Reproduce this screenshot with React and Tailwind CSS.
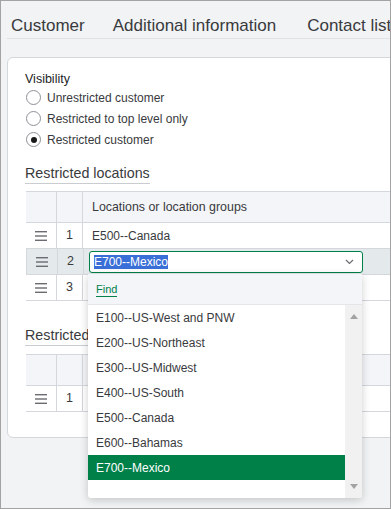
import React from "react";

const Drag = () => (
  <svg width="12" height="10" viewBox="0 0 12 10" className="block">
    <rect x="0" y="0" width="12" height="1.4" fill="#6b6c72" />
    <rect x="0" y="4.3" width="12" height="1.4" fill="#6b6c72" />
    <rect x="0" y="8.6" width="12" height="1.4" fill="#6b6c72" />
  </svg>
);

const Radio = ({ checked, label }) => (
  <div className="flex items-center h-[21px]">
    <div className="ml-[1px] w-[15px] h-[15px] rounded-full border border-[#8d9096] bg-white flex items-center justify-center">
      {checked && <div className="w-[6px] h-[6px] rounded-full bg-[#1a1a1a]" />}
    </div>
    <span className="ml-[6px] text-[12px] text-[#393a3d]">{label}</span>
  </div>
);

const HeaderRow = ({ title }) => (
  <div className="flex h-[32px] bg-[#f4f5f8] border-t border-b border-[#d4d7dc]">
    <div className="w-[31px] border-r border-[#d4d7dc]" />
    <div className="w-[26px] border-r border-[#d4d7dc]" />
    <div className="flex-1 flex items-center pl-[9px] text-[12.4px] text-[#393a3d]">{title}</div>
  </div>
);

const Row = ({ n, text, selected, children }) => (
  <div
    className={
      "flex border-b border-[#d4d7dc] " +
      (selected ? "bg-[#e4e9ec] border-l border-t -mt-[1px] h-[27px]" : "h-[26px]")
    }
  >
    <div className="w-[31px] flex items-center justify-center border-r border-[#d4d7dc]">
      <Drag />
    </div>
    <div className="w-[26px] flex items-center justify-center border-r border-[#d4d7dc] text-[12.5px] text-[#393a3d]">
      {n}
    </div>
    <div className="flex-1 flex items-center pl-[9px] text-[12px] text-[#393a3d]">
      {text}
      {children}
    </div>
  </div>
);

const items = [
  "E100--US-West and PNW",
  "E200--US-Northeast",
  "E300--US-Midwest",
  "E400--US-South",
  "E500--Canada",
  "E600--Bahamas",
  "E700--Mexico",
];

export default function App() {
  return (
    <div
      className="relative w-[391px] h-[509px] overflow-hidden border border-[#a3a3a3] bg-[#f1f3f4]"
      style={{ fontFamily: '"Liberation Sans", Arial, sans-serif' }}
    >
      {/* Tabs */}
      <div className="ml-[6px] flex pl-[4px] pt-[15px] h-[38px] border-b border-[#e0e3e5] whitespace-nowrap text-[17px] text-[#393a3d] leading-[20px]">
        <span>Customer</span>
        <span className="ml-[28px]">Additional information</span>
        <span className="ml-[31px]">Contact list</span>
      </div>

      {/* Card */}
      <div className="ml-[6px] mt-[18px] w-[420px] h-[381px] bg-white border border-[#d4d7dc] rounded-[6px] pl-[17px] pt-[14px]">
        <div className="text-[12.5px] leading-[15px] text-[#222326]">Visibility</div>
        <Radio label="Unrestricted customer" />
        <Radio label="Restricted to top level only" />
        <Radio checked label="Restricted customer" />

        <div className="mt-[15px] w-fit border-b border-[#c9cdd2] text-[14.3px] leading-[17px] pb-[1px] text-[#393a3d]">
          Restricted locations
        </div>

        <div className="mt-[7px] ml-[1px]">
          <HeaderRow title="Locations or location groups" />
          <Row n="1" text="E500--Canada" />
          <Row n="2" selected>
            <div className="-ml-[4px] w-[274px] h-[22px] border border-[#00804a] rounded-[3px] bg-white flex items-center pl-[4px] pr-[8px]">
              <span className="bg-[#3a6fd8] text-white leading-[14px]">E700--Mexico</span>
              <div className="flex-1" />
              <svg width="9" height="6" viewBox="0 0 9 6">
                <path d="M1 1l3.5 3.5L8 1" fill="none" stroke="#6b6c72" strokeWidth="1.2" />
              </svg>
            </div>
          </Row>
          <Row n="3" text="" />
        </div>

        <div className="mt-[26px] w-fit border-b border-[#c9cdd2] text-[14.3px] leading-[17px] pb-[1px] text-[#393a3d]">
          Restricted locations
        </div>
        <div className="mt-[8px] ml-[1px]">
          <HeaderRow title="" />
          <Row n="1" text="" />
        </div>
      </div>

      {/* Dropdown */}
      <div className="absolute left-[87px] top-[273px] w-[274px] h-[224px] bg-white rounded-b-[3px] shadow-[0_2px_8px_rgba(0,0,0,0.2)] flex flex-col overflow-hidden">
        <div className="h-[31px] bg-[#f4f5f8] border-b border-[#e3e5e8] flex items-center pl-[8px]">
          <span className="text-[11px] text-[#00804a] border-b border-[#00804a] leading-[14px]">Find</span>
        </div>
        <div className="flex flex-1">
          <div className="flex-1">
            {items.map((t, i) => (
              <div
                key={t}
                className={
                  "h-[25px] flex items-center pl-[8px] text-[12px] " +
                  (i === 6 ? "bg-[#008049] text-white" : "text-[#393a3d]")
                }
              >
                {t}
              </div>
            ))}
          </div>
          <div className="w-[17px] bg-[#f1f1f1] flex flex-col items-center justify-between pt-[9px] pb-[9px]">
            <svg width="8" height="5" viewBox="0 0 8 5">
              <path d="M0 5L4 0L8 5Z" fill="#a3a3a3" />
            </svg>
            <svg width="8" height="5" viewBox="0 0 8 5">
              <path d="M0 0L4 5L8 0Z" fill="#a3a3a3" />
            </svg>
          </div>
        </div>
      </div>
    </div>
  );
}
